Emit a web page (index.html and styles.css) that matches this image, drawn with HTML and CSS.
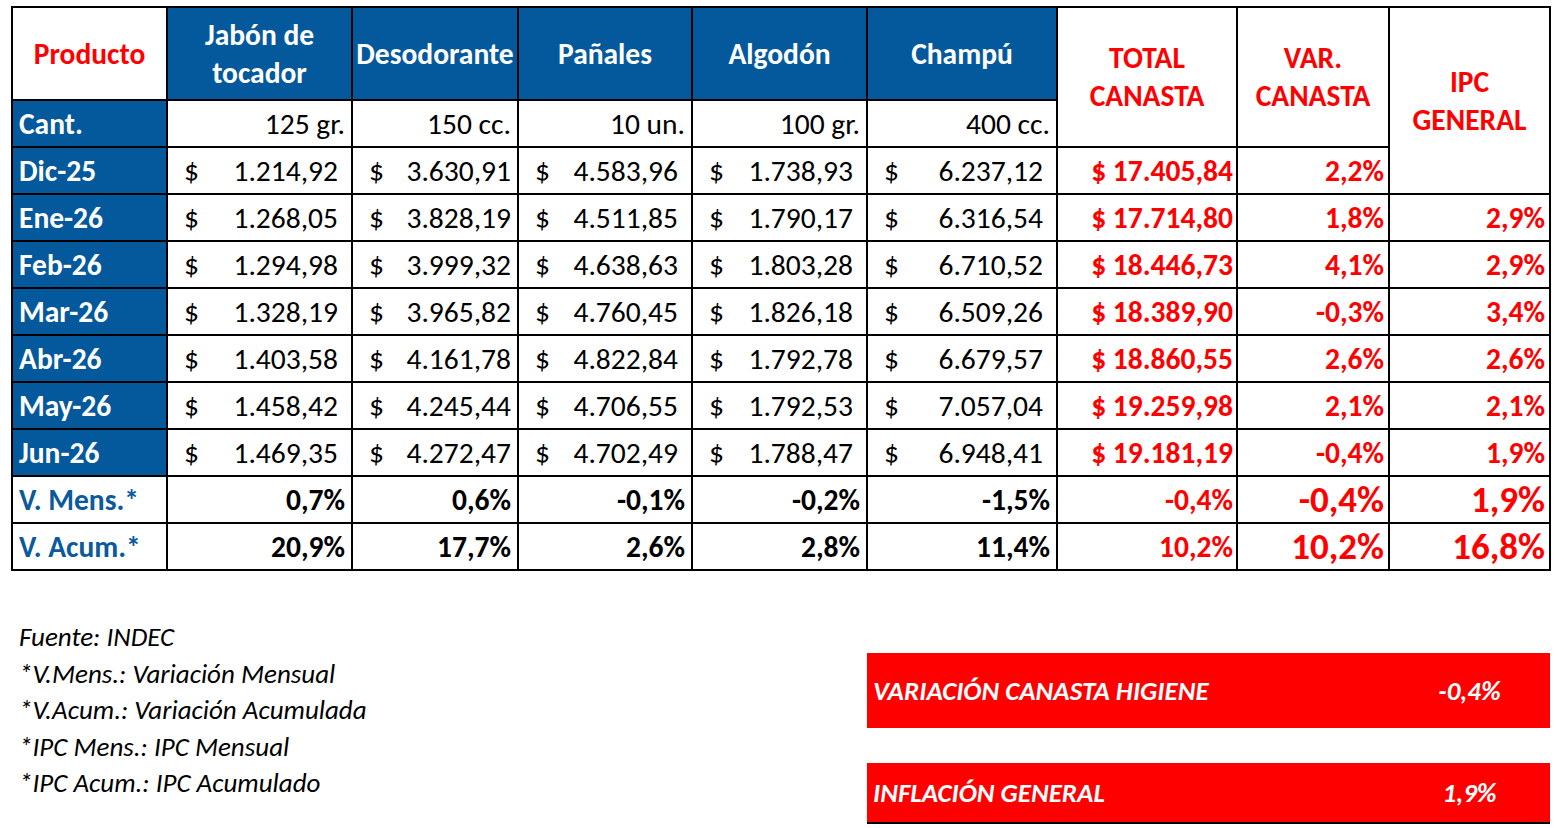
FILE: index.html
```html
<!DOCTYPE html>
<html lang="es">
<head>
<meta charset="utf-8">
<title>Canasta Higiene</title>
<link rel="stylesheet" href="styles.css">
</head>
<body>
<div class="page">
<table class="grid">
<colgroup>
<col class="c0"><col class="c1"><col class="c2"><col class="c3"><col class="c4"><col class="c5"><col class="c6"><col class="c7"><col class="c8">
</colgroup>
<tr class="rh">
<th class="prod">Producto</th>
<th class="bh">Jabón de<br>tocador</th>
<th class="bh">Desodorante</th>
<th class="bh">Pañales</th>
<th class="bh">Algodón</th>
<th class="bh">Champú</th>
<th class="rhd" rowspan="2">TOTAL<br>CANASTA</th>
<th class="rhd" rowspan="2">VAR.<br>CANASTA</th>
<th class="rhd ipc" rowspan="3">IPC<br>GENERAL</th>
</tr>
<tr>
<th class="lbl">Cant.</th>
<td class="qty">125 gr.</td><td class="qty">150 cc.</td><td class="qty">10 un.</td><td class="qty">100 gr.</td><td class="qty">400 cc.</td>
</tr>
<tr>
<th class="lbl">Dic-25</th>
<td class="acc"><div class="ai"><span>$</span><span>1.214,92</span></div></td>
<td class="acc n2"><div class="ai"><span>$</span><span>3.630,91</span></div></td>
<td class="acc"><div class="ai"><span>$</span><span>4.583,96</span></div></td>
<td class="acc"><div class="ai"><span>$</span><span>1.738,93</span></div></td>
<td class="acc"><div class="ai"><span>$</span><span>6.237,12</span></div></td>
<td class="tot">$ 17.405,84</td><td class="pct">2,2%</td>
</tr>
<tr>
<th class="lbl">Ene-26</th>
<td class="acc"><div class="ai"><span>$</span><span>1.268,05</span></div></td>
<td class="acc n2"><div class="ai"><span>$</span><span>3.828,19</span></div></td>
<td class="acc"><div class="ai"><span>$</span><span>4.511,85</span></div></td>
<td class="acc"><div class="ai"><span>$</span><span>1.790,17</span></div></td>
<td class="acc"><div class="ai"><span>$</span><span>6.316,54</span></div></td>
<td class="tot">$ 17.714,80</td><td class="pct">1,8%</td><td class="pct">2,9%</td>
</tr>
<tr>
<th class="lbl">Feb-26</th>
<td class="acc"><div class="ai"><span>$</span><span>1.294,98</span></div></td>
<td class="acc n2"><div class="ai"><span>$</span><span>3.999,32</span></div></td>
<td class="acc"><div class="ai"><span>$</span><span>4.638,63</span></div></td>
<td class="acc"><div class="ai"><span>$</span><span>1.803,28</span></div></td>
<td class="acc"><div class="ai"><span>$</span><span>6.710,52</span></div></td>
<td class="tot">$ 18.446,73</td><td class="pct">4,1%</td><td class="pct">2,9%</td>
</tr>
<tr>
<th class="lbl">Mar-26</th>
<td class="acc"><div class="ai"><span>$</span><span>1.328,19</span></div></td>
<td class="acc n2"><div class="ai"><span>$</span><span>3.965,82</span></div></td>
<td class="acc"><div class="ai"><span>$</span><span>4.760,45</span></div></td>
<td class="acc"><div class="ai"><span>$</span><span>1.826,18</span></div></td>
<td class="acc"><div class="ai"><span>$</span><span>6.509,26</span></div></td>
<td class="tot">$ 18.389,90</td><td class="pct">-0,3%</td><td class="pct">3,4%</td>
</tr>
<tr>
<th class="lbl">Abr-26</th>
<td class="acc"><div class="ai"><span>$</span><span>1.403,58</span></div></td>
<td class="acc n2"><div class="ai"><span>$</span><span>4.161,78</span></div></td>
<td class="acc"><div class="ai"><span>$</span><span>4.822,84</span></div></td>
<td class="acc"><div class="ai"><span>$</span><span>1.792,78</span></div></td>
<td class="acc"><div class="ai"><span>$</span><span>6.679,57</span></div></td>
<td class="tot">$ 18.860,55</td><td class="pct">2,6%</td><td class="pct">2,6%</td>
</tr>
<tr>
<th class="lbl">May-26</th>
<td class="acc"><div class="ai"><span>$</span><span>1.458,42</span></div></td>
<td class="acc n2"><div class="ai"><span>$</span><span>4.245,44</span></div></td>
<td class="acc"><div class="ai"><span>$</span><span>4.706,55</span></div></td>
<td class="acc"><div class="ai"><span>$</span><span>1.792,53</span></div></td>
<td class="acc"><div class="ai"><span>$</span><span>7.057,04</span></div></td>
<td class="tot">$ 19.259,98</td><td class="pct">2,1%</td><td class="pct">2,1%</td>
</tr>
<tr>
<th class="lbl">Jun-26</th>
<td class="acc"><div class="ai"><span>$</span><span>1.469,35</span></div></td>
<td class="acc n2"><div class="ai"><span>$</span><span>4.272,47</span></div></td>
<td class="acc"><div class="ai"><span>$</span><span>4.702,49</span></div></td>
<td class="acc"><div class="ai"><span>$</span><span>1.788,47</span></div></td>
<td class="acc"><div class="ai"><span>$</span><span>6.948,41</span></div></td>
<td class="tot">$ 19.181,19</td><td class="pct">-0,4%</td><td class="pct">1,9%</td>
</tr>
<tr>
<th class="vlbl">V. Mens.*</th>
<td class="bp">0,7%</td><td class="bp">0,6%</td><td class="bp">-0,1%</td><td class="bp">-0,2%</td><td class="bp">-1,5%</td>
<td class="rp">-0,4%</td><td class="bigp">-0,4%</td><td class="bigp">1,9%</td>
</tr>
<tr>
<th class="vlbl">V. Acum.*</th>
<td class="bp">20,9%</td><td class="bp">17,7%</td><td class="bp">2,6%</td><td class="bp">2,8%</td><td class="bp">11,4%</td>
<td class="rp">10,2%</td><td class="bigp">10,2%</td><td class="bigp">16,8%</td>
</tr>
</table>

<div class="bottom">
<div class="notes">
<p>Fuente: INDEC</p>
<p>*V.Mens.: Variación Mensual</p>
<p>*V.Acum.: Variación Acumulada</p>
<p>*IPC Mens.: IPC Mensual</p>
<p>*IPC Acum.: IPC Acumulado</p>
</div>
<div class="boxes">
<div class="box b1"><span class="bl">VARIACIÓN CANASTA HIGIENE</span><span class="bv">-0,4%</span></div>
<div class="box b2"><span class="bl">INFLACIÓN GENERAL</span><span class="bv">1,9%</span></div>
</div>
</div>
</div>
</body>
</html>
```

FILE: styles.css
```css
html, body {
  margin: 0;
  padding: 0;
  background: #ffffff;
}
.page {
  padding: 6px 0 0 11px;
  font-family: Carlito, Lato, "Open Sans", sans-serif;
  color: #000;
}
.grid {
  border-collapse: collapse;
  table-layout: fixed;
  width: 1540px;
  font-size: 29.5px;
}
.c0 { width: 155px; }
.c1 { width: 185px; }
.c2 { width: 166px; }
.c3 { width: 174px; }
.c4 { width: 175px; }
.c5 { width: 190px; }
.c6 { width: 180px; }
.c7 { width: 152px; }
.c8 { width: 161px; }
.grid th, .grid td {
  border: 2px solid #000;
  padding: 0 6px;
  height: 45px;
  line-height: 38px;
  vertical-align: middle;
  overflow: hidden;
  white-space: nowrap;
}
.grid .rh th { height: 91px; }
.prod {
  color: #ff0000;
  font-weight: 700;
  text-align: center;
}
.bh {
  background: #04599c;
  color: #fff;
  font-weight: 700;
  text-align: center;
}
.grid .bh { padding: 0 2px; }
.rhd {
  color: #ff0000;
  font-weight: 700;
  text-align: center;
}
.lbl {
  background: #04599c;
  color: #fff;
  font-weight: 700;
  text-align: left;
}
.vlbl {
  color: #0b5a9c;
  font-weight: 700;
  text-align: left;
}
.qty {
  text-align: right;
}
.grid td.acc { padding: 0 13px 0 16px; }
.grid td.acc.n2 { padding-right: 6px; }
.ai {
  display: flex;
  justify-content: space-between;
}
.tot {
  color: #ff0000;
  font-weight: 700;
  text-align: right;
}
.grid td.tot { padding-right: 3px; }
.pct {
  color: #ff0000;
  font-weight: 700;
  text-align: right;
}
.grid td.pct { padding-right: 4px; }
.bp {
  font-weight: 700;
  text-align: right;
}
.rp {
  color: #ff0000;
  font-weight: 600;
  text-align: right;
}
.grid td.rp { padding-right: 3px; }
.bigp {
  color: #ff0000;
  font-weight: 700;
  font-size: 37px;
  text-align: right;
}
.grid td.bigp { padding-right: 4px; }

.bottom {
  display: flex;
  align-items: flex-start;
}
.notes {
  width: 856px;
  padding: 48px 0 0 8px;
  box-sizing: border-box;
  font-style: italic;
  font-size: 27px;
}
.notes p {
  margin: 0;
  line-height: 36.5px;
}
.boxes {
  width: 683px;
  padding-top: 82px;
  display: flex;
  flex-direction: column;
  gap: 35px;
}
.box {
  background: #ff0000;
  color: #fff;
  font-weight: 700;
  font-style: italic;
  font-size: 27px;
  display: flex;
  align-items: center;
}
.b1 { height: 75px; }
.b2 { height: 59px; border-bottom: 2px solid #000; }
.bl {
  width: 522px;
  padding-left: 6px;
  box-sizing: border-box;
}
.bv {
  width: 161px;
  text-align: center;
}
```
